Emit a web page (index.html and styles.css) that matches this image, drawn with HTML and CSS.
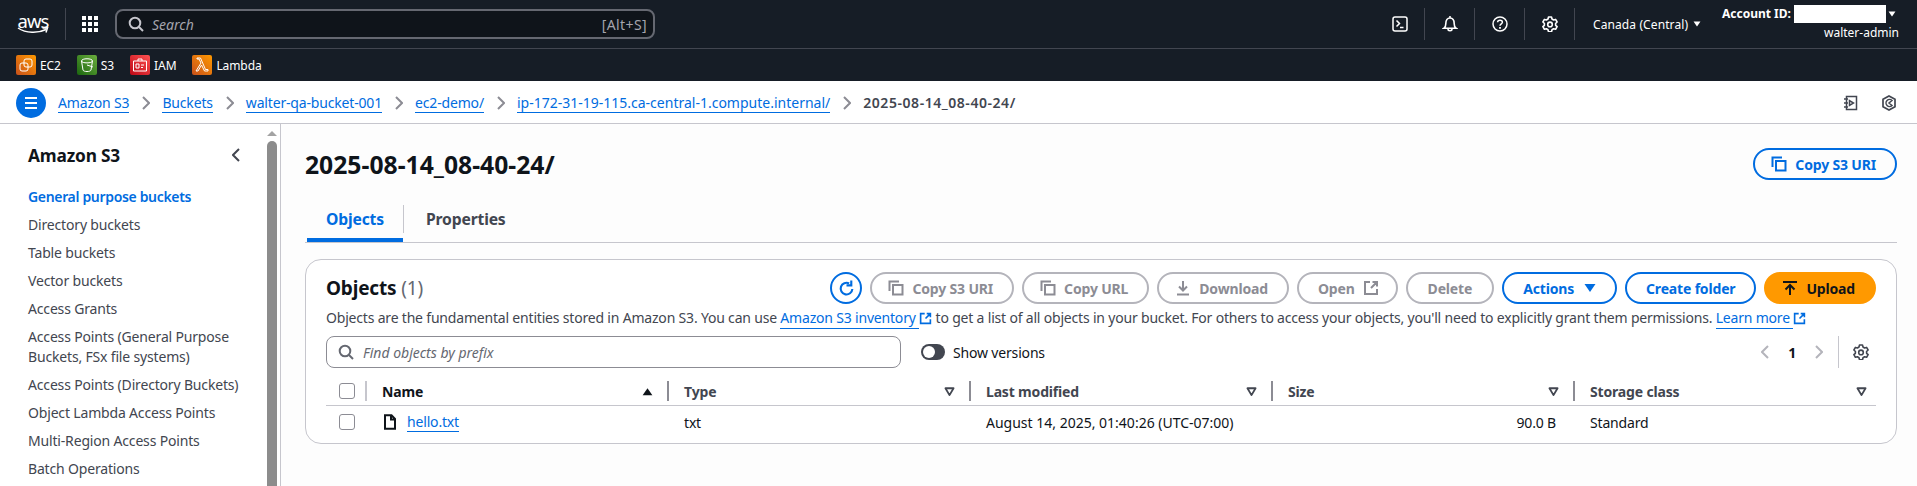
FILE: index.html
```html
<!DOCTYPE html>
<html lang="en">
<head>
    <meta charset="UTF-8">
    <title>S3 bucket</title>
    <link rel="stylesheet" href="styles.css">
</head>
<body>
    <svg class="sprites" width="0" height="0">
        <symbol id="i-copy" viewBox="0 0 16 16"><path d="M1.5 11V1.5H11M5 5h9.500v9.500H5z" fill="none" stroke="currentColor" stroke-width="2"/></symbol>
        <symbol id="i-ext" viewBox="0 0 16 16"><path d="M7 2H2v12h12V9M9.500 2H14v4.500M14 2L8 8" fill="none" stroke="currentColor" stroke-width="2"/></symbol>
        <symbol id="i-gear" viewBox="0 0 16 16"><path d="M6.500 1h3l.5 2 1.600 1 2-.6 1.500 2.600-1.500 1.500v1.800l1.500 1.400-1.500 2.600-2-.6-1.600 1-.5 2h-3l-.5-2-1.600-1-2 .6L.9 10.700l1.500-1.400V7.500L.9 6l1.500-2.600 2 .6L6 3z" fill="none" stroke="currentColor" stroke-width="1.600" stroke-linejoin="round"/><circle cx="8" cy="8.400" r="2.300" fill="none" stroke="currentColor" stroke-width="1.600"/></symbol>
        <symbol id="i-search" viewBox="0 0 16 16"><circle cx="7" cy="7" r="5.300" fill="none" stroke="currentColor" stroke-width="2"/><path d="M11 11l4 4" stroke="currentColor" stroke-width="2"/></symbol>
        <symbol id="i-caret" viewBox="0 0 16 16"><path d="M2.500 4h11L8 12z" fill="currentColor"/></symbol>
        <symbol id="i-sort-up" viewBox="0 0 16 16"><path d="M2 12.500h12L8 4z" fill="currentColor"/></symbol>
        <symbol id="i-sort-off" viewBox="0 0 16 16"><path d="M3 4h10L8 12.500z" fill="none" stroke="currentColor" stroke-width="2.200" stroke-linejoin="round"/></symbol>
        <symbol id="i-chev" viewBox="0 0 8 14"><path d="M1 1l6 6-6 6" fill="none" stroke="currentColor" stroke-width="2"/></symbol>
    </svg>

    <header class="topnav">
        <div class="aws-logo">
            <span class="aws-word">aws</span>
            <svg class="aws-smile" viewBox="0 0 32 7"><path d="M1 1c8 5.500 20 5.500 28 1.500M25.500 1L30.500 .8 29 5.500" fill="none" stroke="#fff" stroke-width="1.500"/></svg>
        </div>
        <div class="nav-sep"></div>
        <svg class="grid-icon" viewBox="0 0 16 16" fill="#fff"><path d="M0 0h4v4H0zM6 0h4v4H6zM12 0h4v4h-4zM0 6h4v4H0zM6 6h4v4H6zM12 6h4v4h-4zM0 12h4v4H0zM6 12h4v4H6zM12 12h4v4h-4z"/></svg>
        <div class="global-search">
            <svg class="ico"><use href="#i-search"/></svg>
            <span class="global-search-text">Search</span>
            <span class="global-search-key">[Alt+S]</span>
        </div>
        <div class="nav-right">
            <div class="nav-icon">
                <svg viewBox="0 0 16 16"><rect x="1" y="1" width="14" height="14" rx="2" fill="none" stroke="#fff" stroke-width="1.500"/><path d="M4.500 4.500L7.500 7.500 4.500 10.500M8 11.500h3.500" fill="none" stroke="#fff" stroke-width="1.500"/></svg>
            </div>
            <div class="nav-icon">
                <svg viewBox="0 0 16 16"><path d="M2 12.200c1.500-1 1.800-2.200 1.800-4.500C3.800 4 5.500 2 8 2s4.200 2 4.200 5.700c0 2.300.3 3.500 1.800 4.500zM6 13c0 2.300 4 2.300 4 0M8 0v2" fill="none" stroke="#fff" stroke-width="1.600"/></svg>
            </div>
            <div class="nav-icon">
                <svg viewBox="0 0 16 16"><circle cx="8" cy="8" r="7" fill="none" stroke="#fff" stroke-width="1.500"/><path d="M5.600 6.200C5.700 3.500 10.400 3.500 10.400 6.200 10.400 7.800 8 7.800 8 9.700" fill="none" stroke="#fff" stroke-width="1.500"/><path d="M7.100 11h1.800v1.800H7.100z" fill="#fff"/></svg>
            </div>
            <div class="nav-icon">
                <svg><use href="#i-gear"/></svg>
            </div>
            <div class="region">Canada (Central) <svg class="caret-small"><use href="#i-caret"/></svg></div>
            <div class="account">
                <div class="account-row"><b>Account ID:</b><span class="redacted"></span><svg class="caret-small"><use href="#i-caret"/></svg></div>
                <div class="account-user">walter-admin</div>
            </div>
        </div>
    </header>

    <nav class="shortcuts">
        <a class="shortcut"><span class="svc svc-ec2"><svg viewBox="0 0 20 20"><rect x="8" y="4" width="8" height="8" rx="2" fill="none" stroke="#fff"/><rect x="4" y="8" width="8" height="8" rx="2" fill="none" stroke="#fff"/></svg></span>EC2</a>
        <a class="shortcut"><span class="svc svc-s3"><svg viewBox="0 0 20 20"><path d="M4.500 6c0-3 11-3 11 0l-1.500 9c-.5 2-7.500 2-8 0zM4.500 6c0 2.500 11 2.500 11 0M10 10l6 2" fill="none" stroke="#fff"/></svg></span>S3</a>
        <a class="shortcut"><span class="svc svc-iam"><svg viewBox="0 0 20 20"><path d="M3.500 6h13v10h-13zM8 6V4h4v2M6 9h3v4H6zM11 10h3M11 12.500h2" fill="none" stroke="#fff"/></svg></span>IAM</a>
        <a class="shortcut"><span class="svc svc-lambda"><svg viewBox="0 0 20 20"><path d="M4 16l5-8-2-4H5V3h3.500l5 11.500H16V16h-3.500L9.500 10 6 16z" fill="none" stroke="#fff"/></svg></span>Lambda</a>
    </nav>

    <div class="crumbbar">
        <div class="menu-btn"><svg viewBox="0 0 16 16"><path d="M2 3h12M2 8h12M2 13h12" stroke="#fff" stroke-width="2"/></svg></div>
        <a class="crumb">Amazon S3</a><svg class="chev"><use href="#i-chev"/></svg>
        <a class="crumb">Buckets</a><svg class="chev"><use href="#i-chev"/></svg>
        <a class="crumb">walter-qa-bucket-001</a><svg class="chev"><use href="#i-chev"/></svg>
        <a class="crumb">ec2-demo/</a><svg class="chev"><use href="#i-chev"/></svg>
        <a class="crumb crumb-wide">ip-172-31-19-115.ca-central-1.compute.internal/</a><svg class="chev"><use href="#i-chev"/></svg>
        <span class="crumb-current">2025-08-14_08-40-24/</span>
        <div class="crumb-tools">
            <svg viewBox="0 0 16 16"><path d="M3.500 1.500h10v13h-10zM1 4h4M1 8h4M1 12h4M6.500 5.500v5L10.500 8z" fill="none" stroke="currentColor" stroke-width="1.500"/></svg>
            <svg viewBox="0 0 16 16"><path d="M8 1l6 3.300v7.400L8 15l-6-3.300V4.300z" fill="none" stroke="currentColor" stroke-width="1.700"/><path d="M11 10.500A3.500 3.500 0 1 1 11 5.500L8 8z" fill="none" stroke="currentColor" stroke-width="1.500"/></svg>
        </div>
    </div>

    <div class="layout">
        <aside class="sidebar">
            <div class="side-inner">
                <div class="side-head">
                    <h2>Amazon S3</h2>
                    <svg class="side-close" viewBox="0 0 8 14"><path d="M7 1L1 7l6 6" fill="none" stroke="currentColor" stroke-width="2"/></svg>
                </div>
                <ul class="side-list">
                    <li class="active">General purpose buckets</li>
                    <li>Directory buckets</li>
                    <li>Table buckets</li>
                    <li>Vector buckets</li>
                    <li>Access Grants</li>
                    <li>Access Points (General Purpose Buckets, FSx file systems)</li>
                    <li>Access Points (Directory Buckets)</li>
                    <li>Object Lambda Access Points</li>
                    <li>Multi-Region Access Points</li>
                    <li>Batch Operations</li>
                </ul>
            </div>
            <div class="scrollbar">
                <div class="scroll-up"></div>
                <div class="scroll-thumb"></div>
            </div>
        </aside>

        <main class="content">
            <div class="page-head">
                <h1>2025-08-14_08-40-24/</h1>
                <button class="btn btn-blue btn-icon"><svg class="ico"><use href="#i-copy"/></svg>Copy S3 URI</button>
            </div>

            <div class="tabs">
                <div class="tab tab-active">Objects</div>
                <div class="tab">Properties</div>
            </div>

            <section class="card">
                <div class="card-top">
                    <h2 class="card-title">Objects <span class="count">(1)</span></h2>
                    <div class="actions">
                        <button class="btn-round"><svg viewBox="0 0 16 16"><path d="M13.500 8.500A5.500 5.500 0 1 1 10.500 3.200" fill="none" stroke="currentColor" stroke-width="2"/><path d="M12.500 .5v4.500H8" fill="none" stroke="currentColor" stroke-width="2"/></svg></button>
                        <button class="btn btn-off btn-icon"><svg class="ico"><use href="#i-copy"/></svg>Copy S3 URI</button>
                        <button class="btn btn-off btn-icon"><svg class="ico"><use href="#i-copy"/></svg>Copy URL</button>
                        <button class="btn btn-off btn-icon"><svg class="ico" viewBox="0 0 16 16"><path d="M8 1v9M4 6.500L8 10.500l4-4M2 14.500h12" fill="none" stroke="currentColor" stroke-width="2"/></svg>Download</button>
                        <button class="btn btn-off btn-iconright">Open<svg class="ico"><use href="#i-ext"/></svg></button>
                        <button class="btn btn-off">Delete</button>
                        <button class="btn btn-blue btn-iconright">Actions<svg class="ico"><use href="#i-caret"/></svg></button>
                        <button class="btn btn-blue btn-create">Create folder</button>
                        <button class="btn btn-orange btn-icon"><svg class="ico" viewBox="0 0 16 16"><path d="M1 2h14M8 15V5M3.500 9.500L8 5l4.500 4.500" fill="none" stroke="currentColor" stroke-width="2"/></svg>Upload</button>
                    </div>
                </div>
                <p class="card-desc">Objects are the fundamental entities stored in Amazon S3. You can use <a class="ext-link"><span>Amazon S3 inventory </span><svg class="ico"><use href="#i-ext"/></svg></a> to get a list of all objects in your bucket. For others to access your objects, you'll need to explicitly grant them permissions. <a class="ext-link"><span>Learn more </span><svg class="ico"><use href="#i-ext"/></svg></a></p>

                <div class="filter-row">
                    <div class="filter-box"><svg class="ico"><use href="#i-search"/></svg><span>Find objects by prefix</span></div>
                    <div class="toggle"><span class="toggle-knob"></span></div>
                    <span class="toggle-label">Show versions</span>
                    <div class="pager">
                        <svg class="pager-arrow" viewBox="0 0 8 14"><path d="M7 1L1 7l6 6" fill="none" stroke="currentColor" stroke-width="2"/></svg>
                        <b>1</b>
                        <svg class="pager-arrow"><use href="#i-chev"/></svg>
                        <div class="pager-sep"></div>
                        <svg class="pager-gear"><use href="#i-gear"/></svg>
                    </div>
                </div>

                <div class="table">
                    <div class="row row-head">
                        <div class="cell cell-check"><span class="check"></span></div>
                        <div class="cell cell-name">Name<svg class="sort"><use href="#i-sort-up"/></svg></div>
                        <div class="cell">Type<svg class="sort"><use href="#i-sort-off"/></svg></div>
                        <div class="cell">Last modified<svg class="sort"><use href="#i-sort-off"/></svg></div>
                        <div class="cell">Size<svg class="sort"><use href="#i-sort-off"/></svg></div>
                        <div class="cell">Storage class<svg class="sort"><use href="#i-sort-off"/></svg></div>
                    </div>
                    <div class="row row-body">
                        <div class="cell cell-check"><span class="check"></span></div>
                        <div class="cell"><svg class="file-ico" viewBox="0 0 16 16"><path d="M3 1.200h6.500L13 5v9.800H3zM9 1.500V5.500h4" fill="none" stroke="currentColor" stroke-width="2"/></svg><a class="file-link">hello.txt</a></div>
                        <div class="cell">txt</div>
                        <div class="cell cell-date">August 14, 2025, 01:40:26 (UTC-07:00)</div>
                        <div class="cell cell-right">90.0 B</div>
                        <div class="cell">Standard</div>
                    </div>
                </div>
            </section>
        </main>
    </div>
</body>
</html>
```

FILE: styles.css
```css
* {
    box-sizing: border-box;
}

html, body {
    height: 100%;
    overflow: hidden;
}

body {
    margin: 0;
    font-family: "Noto Sans", "Open Sans", Arial, sans-serif;
    font-size: 14px;
    letter-spacing: -0.17px;
    color: #0f141a;
    background-color: #fff;
}

.sprites {
    position: absolute;
}

.ico {
    width: 16px;
    height: 16px;
    flex: none;
}

/* top navigation */
.topnav {
    height: 49px;
    background-color: #161d26;
    border-bottom: 1px solid #424650;
    display: flex;
    align-items: center;
    color: #fff;
    padding-left: 17px;
    letter-spacing: 0;
}

.aws-logo {
    width: 32px;
    height: 20px;
    margin-right: 16px;
}

.aws-word {
    display: block;
    font-size: 18.5px;
    line-height: 13px;
    text-align: center;
    letter-spacing: -1px;
}

.aws-smile {
    display: block;
    width: 32px;
    height: 7px;
}

.nav-sep {
    width: 1px;
    height: 32px;
    background-color: #424650;
}

.grid-icon {
    width: 16px;
    height: 16px;
    margin: 0 17px 0 16px;
}

.global-search {
    width: 540px;
    height: 30px;
    background-color: #0f141a;
    border: 2px solid #656871;
    border-radius: 8px;
    display: flex;
    align-items: center;
    padding: 0 6px 0 11px;
    color: #c6c6cd;
}

.global-search-text {
    font-style: italic;
    margin-left: 8px;
    flex: 1;
    color: #a4a4ad;
}

.global-search-key {
    color: #a4a4ad;
    letter-spacing: .4px;
}

.nav-right {
    margin-left: auto;
    display: flex;
    align-items: center;
    height: 100%;
}

.nav-icon {
    width: 50px;
    height: 32px;
    border-right: 1px solid #424650;
    display: flex;
    align-items: center;
    justify-content: center;
}

.nav-icon svg {
    width: 16px;
    height: 16px;
    color: #fff;
}

.region {
    font-size: 12px;
    letter-spacing: .1px;
    width: 147px;
    padding-left: 18px;
    white-space: nowrap;
    display: flex;
    align-items: center;
    gap: 4px;
}

.caret-small {
    width: 10px;
    height: 10px;
    color: #fff;
    flex: none;
}

.account {
    width: 195px;
    font-size: 12px;
    padding-right: 18px;
    text-align: right;
}

.account-row {
    display: flex;
    align-items: center;
    justify-content: flex-end;
    height: 18px;
    white-space: nowrap;
    padding-right: 2px;
    margin-top: -2px;
}

.redacted {
    width: 97px;
    height: 18px;
    background-color: #fff;
    margin: 0 1px 0 3px;
}

.account-user {
    line-height: 18px;
    margin-top: 1px;
}

/* favorites bar */
.shortcuts {
    height: 32px;
    background-color: #161d26;
    display: flex;
    align-items: center;
    padding-left: 16px;
    gap: 16px;
}

.shortcut {
    display: flex;
    align-items: center;
    gap: 4px;
    color: #fff;
    font-size: 12px;
    letter-spacing: -0.1px;
}

.svc {
    width: 20px;
    height: 20px;
    border-radius: 2px;
    display: flex;
}

.svc svg {
    width: 20px;
    height: 20px;
}

.svc-ec2, .svc-lambda {
    background: linear-gradient(45deg, #c8511b, #ff9900);
}

.svc-s3 {
    background: linear-gradient(45deg, #1b660f, #6cae3e);
}

.svc-iam {
    background: linear-gradient(45deg, #bd0816, #ff5252);
}

/* breadcrumbs */
.crumbbar {
    height: 43px;
    background-color: #fff;
    border-bottom: 1px solid #c6c6cd;
    display: flex;
    align-items: center;
    padding: 1px 20px 0 16px;
    color: #8c8c94;
}

.menu-btn {
    width: 30px;
    height: 30px;
    border-radius: 50%;
    background-color: #006ce0;
    display: flex;
    align-items: center;
    justify-content: center;
    margin-right: 12px;
}

.menu-btn svg {
    width: 16px;
    height: 16px;
}

.crumb {
    color: #006ce0;
    border-bottom: 1px solid #006ce0;
    line-height: 19px;
}

.crumb-wide {
    letter-spacing: 0;
}

.chev {
    width: 8px;
    height: 14px;
    margin: 0 12px 0 13px;
    flex: none;
}

.crumb-current {
    font-weight: 600;
    letter-spacing: .55px;
    color: #424650;
}

.crumb-tools {
    margin-left: auto;
    display: flex;
    gap: 22px;
    color: #424650;
}

.crumb-tools svg {
    width: 16px;
    height: 16px;
}

/* page body */
.layout {
    display: flex;
    height: 362px;
}

.sidebar {
    width: 281px;
    flex: none;
    border-right: 1px solid #c6c6cd;
    background-color: #fff;
    display: flex;
    overflow: hidden;
}

.side-inner {
    flex: 1;
    padding: 19px 0 0 28px;
}

.side-head {
    display: flex;
    align-items: center;
    justify-content: space-between;
    padding-right: 27px;
    height: 24px;
}

.side-head h2 {
    margin: 0;
    font-size: 17.3px;
    font-weight: 700;
}

.side-close {
    width: 8px;
    height: 14px;
    color: #424650;
}

.side-list {
    list-style: none;
    margin: 20px 0 0 0;
    padding: 0 20px 0 0;
    color: #424650;
    line-height: 20px;
}

.side-list li {
    margin-bottom: 8px;
}

.side-list .active {
    color: #006ce0;
    font-weight: 600;
    letter-spacing: -0.33px;
}

.scrollbar {
    width: 10px;
    margin-right: 3px;
    flex: none;
}

.scroll-up {
    width: 0;
    height: 0;
    margin: 7px auto 0 auto;
    border-left: 5px solid transparent;
    border-right: 5px solid transparent;
    border-bottom: 5px solid #a3a3a3;
}

.scroll-thumb {
    margin-top: 5px;
    height: 400px;
    background-color: #8c8c8c;
    border-radius: 5px;
}

.content {
    flex: 1;
    background-color: #fdfdfd;
    padding: 24px 20px 0 24px;
    min-width: 0;
}

.page-head {
    display: flex;
    align-items: center;
    justify-content: space-between;
    height: 32px;
}

.page-head h1 {
    margin: 0;
    font-size: 24.7px;
    font-weight: 700;
    letter-spacing: 0;
}

/* buttons */
.btn {
    height: 32px;
    border-radius: 16px;
    border: 2px solid;
    background-color: transparent;
    font-family: inherit;
    font-size: 14px;
    letter-spacing: inherit;
    font-weight: 700;
    padding: 0 20px;
    display: inline-flex;
    align-items: center;
    gap: 8px;
    white-space: nowrap;
}

.btn-icon {
    padding: 0 19px 0 16px;
}

.btn-iconright {
    padding: 0 17px 0 19px;
}

.btn-create {
    padding: 0 19px;
}

.btn-blue {
    border-color: #006ce0;
    color: #006ce0;
}

.btn-off {
    border-color: #b4b4bb;
    color: #8c8c94;
}

.btn-orange {
    background-color: #ff9900;
    border-color: #ff9900;
    color: #0f141a;
}

.btn-round {
    width: 32px;
    height: 32px;
    border-radius: 50%;
    border: 2px solid #006ce0;
    background: transparent;
    color: #006ce0;
    padding: 0;
    display: flex;
    align-items: center;
    justify-content: center;
}

.btn-round svg {
    width: 17px;
    height: 17px;
}

/* tabs */
.tabs {
    margin-top: 20px;
    display: flex;
    height: 43px;
    border-bottom: 1px solid #c6c6cd;
}

.tab {
    padding: 0 23px;
    height: 42px;
    line-height: 38px;
    font-weight: 700;
    font-size: 15.7px;
    color: #424650;
    position: relative;
}

.tab-active {
    color: #006ce0;
    width: 96px;
    margin-left: 2px;
    border-bottom: 4px solid #006ce0;
    padding: 0 0 0 19px;
}

.tab-active::after {
    content: "";
    position: absolute;
    right: -1px;
    top: 5px;
    height: 28px;
    width: 1px;
    background-color: #c6c6cd;
}

/* objects card */
.card {
    margin-top: 16px;
    height: 185px;
    border: 1px solid #c6c6cd;
    border-radius: 16px;
    background-color: #fff;
    padding: 12px 20px 0 20px;
}

.card-top {
    display: flex;
    align-items: center;
    justify-content: space-between;
    height: 32px;
}

.card-title {
    margin: 0;
    font-size: 19px;
    font-weight: 700;
}

.count {
    font-weight: 400;
    color: #656871;
}

.actions {
    display: flex;
    gap: 8px;
}

.card-desc {
    margin: 4px 0 0 0;
    line-height: 20px;
    letter-spacing: -0.19px;
    color: #424650;
    white-space: nowrap;
}

.ext-link {
    color: #006ce0;
}

.ext-link span {
    border-bottom: 1px solid #006ce0;
    padding-bottom: 1px;
}

.ext-link .ico {
    vertical-align: -2px;
    width: 13px;
    height: 13px;
}

.filter-row {
    display: flex;
    align-items: center;
    margin-top: 8px;
    height: 32px;
}

.filter-box {
    width: 575px;
    height: 32px;
    border: 1px solid #8c8c94;
    border-radius: 8px;
    display: flex;
    align-items: center;
    gap: 9px;
    padding-left: 11px;
    color: #656871;
    font-style: italic;
    letter-spacing: 0;
}

.toggle {
    width: 24px;
    height: 16px;
    border-radius: 8px;
    background-color: #424650;
    margin-left: 20px;
    padding: 2px;
}

.toggle-knob {
    display: block;
    width: 12px;
    height: 12px;
    border-radius: 50%;
    background-color: #fff;
}

.toggle-label {
    margin-left: 8px;
}

.pager {
    margin-left: auto;
    display: flex;
    align-items: center;
    color: #b4b4bb;
    height: 32px;
}

.pager b {
    color: #0f141a;
    margin: 0 19px;
    font-weight: 700;
}

.pager-arrow {
    width: 8px;
    height: 14px;
}

.pager-sep {
    width: 1px;
    height: 32px;
    background-color: #c6c6cd;
    margin: 0 14px 0 15px;
}

.pager-gear {
    width: 16px;
    height: 16px;
    color: #424650;
    margin-right: 7px;
}

/* table */
.table {
    margin-top: 9px;
}

.row {
    display: grid;
    grid-template-columns: 39px repeat(5, 302px);
    align-items: center;
}

.row-head {
    height: 29px;
    border-bottom: 1px solid #c6c6cd;
    font-weight: 700;
    color: #424650;
}

.row-body {
    height: 32px;
}

.cell {
    display: flex;
    align-items: center;
    height: 20px;
    border-left: 2px solid transparent;
    padding: 0 17px 0 15px;
    white-space: nowrap;
    min-width: 0;
}

.row-head .cell {
    border-left-color: #8c8c94;
    padding-right: 13px;
}

.row-head .cell:last-child {
    padding-right: 7px;
}

.row-head .cell-check {
    border-left-color: transparent;
}

.row-head .cell-name {
    border-left-color: #c6c6cd;
    color: #0f141a;
}

.row .cell-check {
    padding: 0 0 0 11px;
}

.cell-date {
    letter-spacing: 0;
}

.cell-right {
    justify-content: flex-end;
}

.check {
    display: block;
    width: 16px;
    height: 16px;
    border: 1px solid #8c8c94;
    border-radius: 3px;
    background-color: #fff;
}

.sort {
    width: 13px;
    height: 13px;
    margin-left: auto;
    flex: none;
}

.file-ico {
    width: 16px;
    height: 16px;
    margin-right: 9px;
    flex: none;
}

.file-link {
    color: #006ce0;
    border-bottom: 1px solid #006ce0;
}
```
